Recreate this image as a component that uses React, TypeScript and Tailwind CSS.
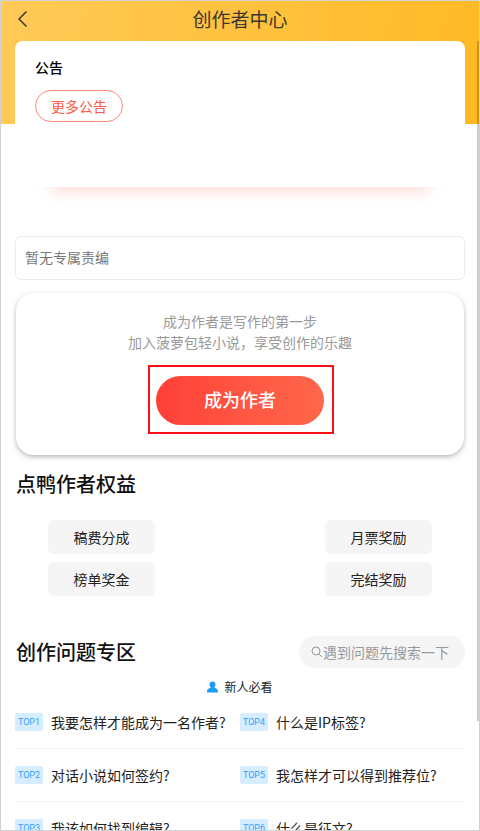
import React from "react";

const benefits: string[] = ["稿费分成", "月票奖励", "榜单奖金", "完结奖励"];

const questions: { rank: string; title: string }[] = [
  { rank: "TOP1", title: "我要怎样才能成为一名作者?" },
  { rank: "TOP4", title: "什么是IP标签?" },
  { rank: "TOP2", title: "对话小说如何签约?" },
  { rank: "TOP5", title: "我怎样才可以得到推荐位?" },
  { rank: "TOP3", title: "我该如何找到编辑?" },
  { rank: "TOP6", title: "什么是征文?" },
];

function Header() {
  return (
    <header className="grid h-9 shrink-0 grid-cols-[44px_1fr_44px] items-center text-[#3d3830]">
      <button type="button" aria-label="返回" className="flex h-9 items-center pl-4">
        <svg width="12" height="18" viewBox="0 0 12 18" fill="none" stroke="currentColor" strokeWidth="1.5">
          <path d="M9.5 1.5 2 9l7.5 7.5" />
        </svg>
      </button>
      <h1 className="text-center text-[19px] leading-6">创作者中心</h1>
    </header>
  );
}

function Notice() {
  return (
    <section className="h-[146px] rounded-t-lg bg-white px-5 pt-4 shadow-[0_38px_16px_-36px_rgba(250,90,70,0.28)]">
      <h2 className="text-sm font-medium text-black">公告</h2>
      <button
        type="button"
        className="mt-[13px] h-8 rounded-full border border-[#ff8a7c] px-[15px] text-sm text-[#fb5b47]"
      >
        更多公告
      </button>
    </section>
  );
}

function JoinCard() {
  return (
    <section className="mx-px mt-[13px] flex flex-col items-center rounded-[18px] bg-white pt-[18px] pb-[30px] shadow-[0_2px_5px_rgba(0,0,0,0.28)]">
      <p className="text-center text-sm leading-[21px] text-[#999]">
        成为作者是写作的第一步
        <br />
        加入菠萝包轻小说，享受创作的乐趣
      </p>
      <div className="relative mt-[23px]">
        <button
          type="button"
          className="block h-[49px] w-[168px] rounded-full bg-linear-to-r from-[#ff3f38] to-[#ff674b] pb-1 text-lg font-medium text-white"
        >
          成为作者
        </button>
        <span className="pointer-events-none absolute -top-[11px] -right-2.5 -bottom-[9px] -left-2 border-2 border-[#fb0f17]" />
      </div>
    </section>
  );
}

function Benefits() {
  return (
    <section className="mt-[15px]">
      <h2 className="pl-px text-xl leading-7 font-medium text-[#111]">点鸭作者权益</h2>
      <ul className="mt-[22px] grid grid-cols-[107px_107px] justify-between gap-y-2 px-[33px]">
        {benefits.map((name) => (
          <li
            key={name}
            className="flex h-[34px] items-center justify-center rounded-md bg-[#f5f5f5] text-sm text-[#222]"
          >
            {name}
          </li>
        ))}
      </ul>
    </section>
  );
}

function Questions() {
  return (
    <section className="mt-10">
      <div className="flex items-center justify-between">
        <h2 className="pl-px text-xl leading-7 font-medium text-[#111]">创作问题专区</h2>
        <label className="flex h-8 w-[166px] items-center rounded-full bg-[#f5f5f5] pl-3 text-[#999]">
          <svg width="12" height="12" viewBox="0 0 12 12" fill="none" stroke="currentColor" strokeWidth="1" className="shrink-0">
            <circle cx="5" cy="5" r="4" />
            <path d="m8 8 3 3" />
          </svg>
          <input
            type="search"
            aria-label="搜索问题"
            placeholder="遇到问题先搜索一下"
            className="min-w-0 flex-1 bg-transparent text-sm outline-none placeholder:text-[#999]"
          />
        </label>
      </div>
      <div className="mt-2.5 flex items-center justify-center gap-1.5 text-xs leading-[18px] text-[#222]">
        <svg width="11" height="12" viewBox="0 0 11 12" fill="#1e9bf5">
          <path d="M5.5 0.5C7.3 0.5 8.5 1.7 8.5 3.4C8.5 4.8 7.8 5.8 7 6.4C9.5 7 11 8.6 11 10.6V11.5H0V10.6C0 8.6 1.5 7 4 6.4C3.2 5.8 2.5 4.8 2.5 3.4C2.5 1.7 3.7 0.5 5.5 0.5Z" />
        </svg>
        新人必看
      </div>
      <ul className="grid grid-cols-2">
        {questions.map((q) => (
          <li key={q.rank} className="border-b border-[#f3f3f3]">
            <a href="#question" className="flex h-[52px] items-center gap-2 whitespace-nowrap text-sm text-[#222]">
              <span className="flex h-[18px] w-7 shrink-0 items-center justify-center rounded-xs bg-[#d6edff] font-['Roboto',sans-serif] text-[9px] text-[#389dfa]">
                {q.rank}
              </span>
              {q.title}
            </a>
          </li>
        ))}
      </ul>
    </section>
  );
}

export default function App() {
  return (
    <div className="relative flex h-screen flex-col overflow-hidden border border-[#d2d2d2] bg-white bg-[linear-gradient(100deg,#ffca58,#ffb924)] bg-[length:100%_123px] bg-no-repeat font-['Noto_Sans_CJK_SC',sans-serif]">
      <Header />
      <main className="mt-1 min-h-0 flex-1 overflow-y-auto px-3.5 [scrollbar-width:none]">
        <Notice />
        <p className="mt-[49px] flex h-11 items-center rounded-md border border-[#ececec] px-[9px] pb-0.5 text-sm text-[#777]">
          暂无专属责编
        </p>
        <JoinCard />
        <Benefits />
        <Questions />
      </main>
      <span className="pointer-events-none absolute top-10 right-0 h-[680px] w-0.5 bg-black/20" />
    </div>
  );
}
